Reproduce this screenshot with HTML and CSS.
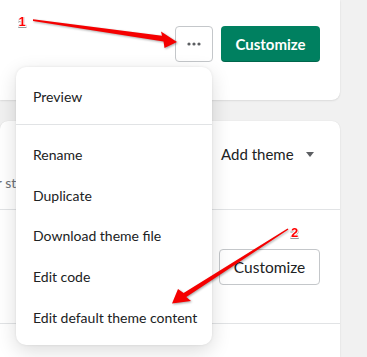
FILE: index.html
```html
<!DOCTYPE html>
<html lang="en">
<head>
  <meta charset="UTF-8">
  <meta name="viewport" content="width=device-width, initial-scale=1.0">
  <title>Themes</title>
  <link rel="stylesheet" href="styles.css">
</head>
<body>

<div class="page">
  <section class="card current">
    <button class="btn-more" aria-label="More actions">
      <svg width="14" height="4" viewBox="0 0 14 4"><circle cx="2" cy="2" r="1.6"/><circle cx="7" cy="2" r="1.6"/><circle cx="12" cy="2" r="1.6"/></svg>
    </button>
    <button class="btn-primary">Customize</button>
  </section>

  <section class="card library">
    <div class="library-head">
      <p class="library-desc">your store</p>
      <div class="add-theme">Add theme <span class="caret"></span></div>
    </div>
    <div class="library-row">
      <button class="btn-outline">Customize</button>
    </div>
    <div class="library-row empty"></div>
  </section>

  <div class="menu">
    <ul class="menu-section first">
      <li>Preview</li>
    </ul>
    <ul class="menu-section">
      <li>Rename</li>
      <li>Duplicate</li>
      <li>Download theme file</li>
      <li>Edit code</li>
      <li>Edit default theme content</li>
    </ul>
  </div>

  <!-- annotation arrows -->
  <svg class="marks" width="367" height="357" viewBox="0 0 367 357">
    <polygon class="arrow" points="33,19.2 162,35.8 161,31.5 177,42 164.5,48 163.5,41.5 33,21"/>
    <polygon class="arrow" points="287.6,228.4 183.6,292.9 178,289 172,303.5 191,301 186.3,297.1 288.4,229.6"/>
    <text class="mark-num" x="18.5" y="26">1</text>
    <text class="mark-num" x="291" y="237">2</text>
  </svg>
</div>

</body>
</html>
```

FILE: styles.css
```css
/* base */
body {
  margin: 0;
  background-color: #f1f1f1;
  font-family: 'Lato', 'Liberation Sans', sans-serif;
  color: #202223;
}
.page {
  position: relative;
  width: 367px;
  height: 357px;
  overflow: hidden;
}
.card {
  width: 340px;
  background-color: #fff;
  box-shadow: 0 0 1px rgba(0, 0, 0, 0.12), 0 1px 2px rgba(0, 0, 0, 0.08);
}
button {
  font-family: inherit;
  cursor: pointer;
}

/* current theme card */
.current {
  height: 100px;
  box-sizing: border-box;
  border-radius: 0 0 8px 0;
  padding: 26px 20px 0 0;
  display: flex;
  justify-content: flex-end;
  align-items: flex-start;
  gap: 8px;
}
.btn-more {
  width: 38px;
  height: 36px;
  padding: 0;
  border: 1px solid #c4c7ca;
  border-radius: 4px;
  background-color: #fff;
  display: flex;
  align-items: center;
  justify-content: center;
}
.btn-more svg {
  fill: #5c5f62;
}
.btn-primary {
  width: 99px;
  height: 36px;
  border: none;
  border-radius: 4px;
  background-color: #008060;
  color: #fff;
  font-size: 15px;
  font-weight: 700;
  box-shadow: inset 0 -1px 0 rgba(0, 0, 0, 0.2);
}

/* theme library card */
.library {
  margin-top: 21px;
  height: 236px;
  border-radius: 8px 8px 0 0;
}
.library-head {
  height: 88px;
  position: relative;
}
.library-desc {
  margin: 0;
  position: absolute;
  left: -26px;
  top: 53px;
  font-size: 14px;
  color: #6d7175;
}
.add-theme {
  position: absolute;
  left: 221px;
  top: 24px;
  font-size: 15px;
  display: flex;
  align-items: center;
  gap: 12px;
}
.caret {
  width: 0;
  height: 0;
  border-left: 4px solid transparent;
  border-right: 4px solid transparent;
  border-top: 5px solid #5c5f62;
}
.library-row {
  border-top: 1px solid #e1e3e5;
  height: 114px;
  display: flex;
  justify-content: flex-end;
  align-items: flex-start;
  padding-right: 20px;
  box-sizing: border-box;
}
.library-row.empty {
  height: 32px;
}
.btn-outline {
  margin-top: 39px;
  width: 101px;
  height: 36px;
  border: 1px solid #c4c7ca;
  border-radius: 4px;
  background-color: #fff;
  color: #202223;
  font-size: 15.5px;
}

/* actions popover */
.menu {
  position: absolute;
  left: 16px;
  top: 67px;
  width: 196px;
  height: 278px;
  background-color: #fff;
  border-radius: 10px;
  box-shadow: 0 0 3px rgba(0, 0, 0, 0.08), 0 6px 20px rgba(0, 0, 0, 0.14);
}
.menu-section {
  list-style: none;
  margin: 0;
  padding: 10px 0 7px;
}
.menu-section.first {
  padding-bottom: 6px;
  border-bottom: 1px solid #e1e3e5;
}
.menu-section li {
  padding: 10px 17px;
  line-height: 20.75px;
  font-size: 14px;
  color: #202223;
  white-space: nowrap;
}

/* annotations */
.marks {
  position: absolute;
  left: 0;
  top: 0;
  pointer-events: none;
}
.arrow {
  fill: #f50000;
  filter: drop-shadow(1px 1px 1px rgba(0, 0, 0, 0.35));
}
.mark-num {
  font-family: 'Liberation Sans', sans-serif;
  font-size: 13px;
  font-weight: bold;
  fill: #f00;
  stroke: #fff;
  stroke-width: 2px;
  paint-order: stroke;
  filter: drop-shadow(0.5px 1px 0.5px rgba(0, 0, 0, 0.4));
}
```
